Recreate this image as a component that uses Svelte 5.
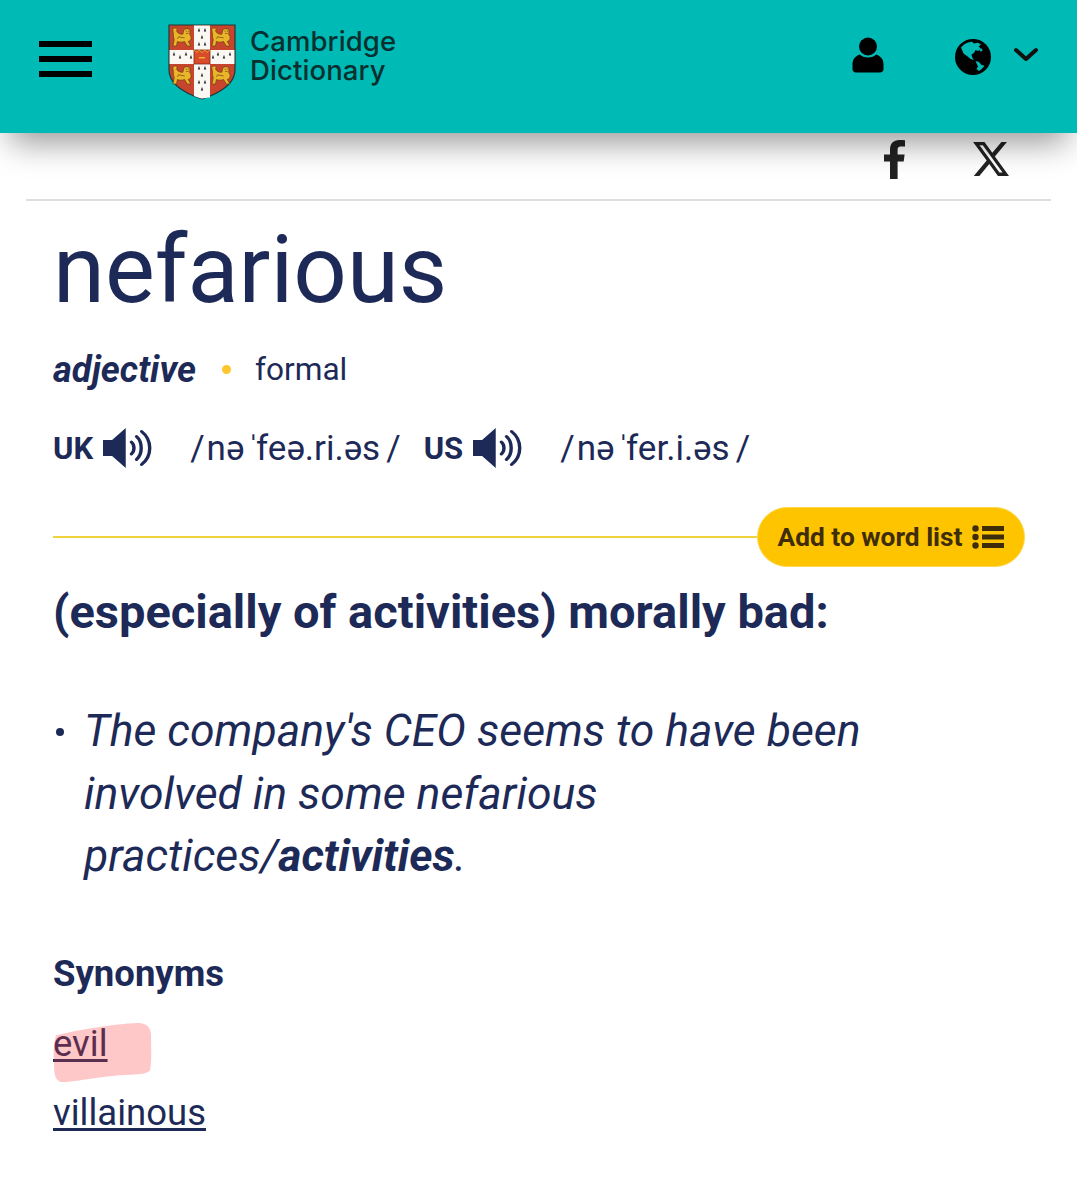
<script>
  const lions = [
    [4, 4], [43, 4], [4, 42], [43, 42]
  ];
  const ermine = [
    [31, 6], [37, 6], [34, 13], [31, 20], [37, 20],
    [6, 30], [12, 33], [18, 30], [23, 33], [45, 33], [50, 30], [56, 33], [62, 30],
    [31, 44], [37, 44], [34, 51], [31, 58], [37, 58], [34, 65]
  ];
</script>

<header class="top">
  <button class="burger" aria-label="Menu"><span></span><span></span><span></span></button>
  <div class="brand">
    <svg class="shield" viewBox="0 0 68 76" aria-hidden="true">
      <path d="M1 1H67V46C67 60 52 69 34 75C16 69 1 60 1 46Z" fill="#c8452d" stroke="#1d3a3a" stroke-width="1.2"/>
      <path d="M26 1.600H42V26H66.400V40H42V73.500C38 73.500 36 74.400 34 74.400C32 74.400 30 73.500 26 72V40H1.600V26H26Z" fill="#fbf8f4"/>
      {#each lions as [x, y]}
        <g transform="translate({x} {y}) scale(.9)">
          <path d="M1 3C0 0 4-1 6 1L5 3C6 6 9 7 12 7L13 3C13 0 20 0 20 3C20 6 19 8 21 9C22 12 20 15 18 15L21 20H17L14 15C11 16 8 16 6 15L5 20H1L2.500 13C1 10 2 6 1 3Z" fill="#eab42b" stroke="#5c3d0c" stroke-width=".7"/>
          <path d="M15 3.500h1.500M17.500 3.500h1.500M15.500 6h3M8 10l6 1M6 12l2-3" stroke="#5c3d0c" stroke-width=".7" fill="none"/>
        </g>
      {/each}
      {#each ermine as [x, y]}
        <path d="M{x} {y - 2.2}l1.200 3.600h-2.400z" fill="#23282b"/>
      {/each}
      <rect x="26" y="26" width="16" height="14" fill="#d94b2b" stroke="#7b2a18" stroke-width=".8"/>
      <path d="M26 26l3 2.500 2-2.500 3 2.500 3-2.500 2 2.500 3-2.500" fill="none" stroke="#e9b32a" stroke-width=".8"/>
      <path d="M31 33h6v1.500h-6z" fill="#e9b32a"/>
    </svg>
    <div class="wordmark">Cambridge<br />Dictionary</div>
  </div>
  <div class="tools">
    <svg class="user" viewBox="0 0 32 36" aria-label="Account">
      <circle cx="16" cy="9.500" r="9"/>
      <path d="M8 17.500C11 21.500 21 21.500 24 17.500C28 18.500 31.500 22 31.500 27V32C31.500 34 30 35.500 28 35.500H4C2 35.500 .5 34 .5 32V27C.5 22 4 18.500 8 17.500Z"/>
    </svg>
    <svg class="globe" viewBox="0 0 36 36" aria-label="Language">
      <circle cx="18" cy="18" r="18" fill="#000"/>
      <path d="M6 8.500C9 5 13 3 17 2.800L19 4.500L23 3.800L26 5.500L23.500 7.500L26 9.500L23 12L20.500 11L19 14L16.500 15.500L17.500 19L19 21L15.500 20L12 17L8.500 14.500Z" fill="#00bab5"/>
      <path d="M20.500 22L24 23L26.500 26L29.500 26.500C28 29 26 31 24 32L21.500 30L23 27.500Z" fill="#00bab5"/>
      <path d="M24.500 10.500L27 9.500L27.500 12L25 12.500Z" fill="#00bab5"/>
    </svg>
    <svg class="chev" viewBox="0 0 26 16" aria-hidden="true"><path d="M3 3L13 12L23 3" fill="none" stroke="#111" stroke-width="4" stroke-linecap="round" stroke-linejoin="round"/></svg>
  </div>
</header>

<div class="social">
  <svg class="fb" viewBox="0 0 22 39" aria-label="Facebook">
    <path d="M6 39V21.500H0V14.600H6V9.600C6 3.400 9.600 0 15.200 0C17.900 0 20.200.2 21 .3V6.500H17.200C14.200 6.500 13.600 8 13.600 10V14.600H20.600L19.700 21.500H13.600V39Z" fill="#222"/>
  </svg>
  <svg class="xlogo" viewBox="1.200 2.250 21.600 19.500" preserveAspectRatio="none" aria-label="X">
    <path d="M18.244 2.250h3.308l-7.227 8.260 8.502 11.240H16.170l-5.214-6.817L4.990 21.750H1.680l7.730-8.835L1.254 2.250H8.080l4.713 6.231zm-1.161 17.520h1.833L7.084 4.126H5.117z" fill="#222"/>
  </svg>
</div>

<main>
  <h1>nefarious</h1>
  <div class="pos">
    <b>adjective</b>
    <i class="dot"></i>
    <span>formal</span>
  </div>
  <div class="pron">
    <b>UK</b>
    <svg class="speaker" viewBox="0 0 44 42" preserveAspectRatio="none" aria-hidden="true">
      <path d="M0 13H8L20 1V41L8 29H0Z" fill="#1d2a57"/>
      <path d="M25 15C28 18 28 24 25 27M29.500 9.500C35 15 35 27 29.500 32.500M34 4.500C43.500 13 43.500 29 34 37.500" fill="none" stroke="#1d2a57" stroke-width="3" stroke-linecap="round"/>
    </svg>
    <span class="ipa ipa1"><span class="sl">/</span>nə<span class="st">ˈ</span>feə.ri.əs<span class="sr">/</span></span>
    <b class="us">US</b>
    <svg class="speaker" viewBox="0 0 44 42" preserveAspectRatio="none" aria-hidden="true">
      <path d="M0 13H8L20 1V41L8 29H0Z" fill="#1d2a57"/>
      <path d="M25 15C28 18 28 24 25 27M29.500 9.500C35 15 35 27 29.500 32.500M34 4.500C43.500 13 43.500 29 34 37.500" fill="none" stroke="#1d2a57" stroke-width="3" stroke-linecap="round"/>
    </svg>
    <span class="ipa"><span class="sl">/</span>nə<span class="st">ˈ</span>fer.i.əs<span class="sr">/</span></span>
  </div>
  <div class="rule">
    <i></i>
    <button class="add">Add to word list
      <svg viewBox="0 0 32 24" aria-hidden="true">
        <g fill="#3f2d0a"><circle cx="3.500" cy="3.500" r="3.200"/><circle cx="3.500" cy="12" r="3.200"/><circle cx="3.500" cy="20.500" r="3.200"/><rect x="10" y="1" width="22" height="5"/><rect x="10" y="9.500" width="22" height="5"/><rect x="10" y="18" width="22" height="5"/></g>
      </svg>
    </button>
  </div>
  <h2>(especially of activities) morally bad:</h2>
  <ul>
    <li>The company's CEO seems to have been involved in some nefarious practices/<b>activities</b>.</li>
  </ul>
  <h3>Synonyms</h3>
  <div class="syn">
    <svg class="mark" viewBox="0 0 100 58" preserveAspectRatio="none" aria-hidden="true">
      <path d="M3 12C30 6 60 1 86 0C94 0 99 4 99 12C99 24 100 36 98 47C92 52 78 50 60 52C40 54 20 58 8 58C2 56 1 50 1 40C0 30 1 20 3 12Z" fill="#fa3a3e" fill-opacity=".28"/>
    </svg>
    <a href="#evil">evil</a>
    <a href="#villainous">villainous</a>
  </div>
</main>

<style>
  :global(body) { margin: 0; background: #fff; }
  :global(#app) { font-family: Roboto, "Liberation Sans", sans-serif; color: #1d2a57; height: 1200px; overflow: hidden; }

  .top {
    position: relative;
    z-index: 1;
    height: 133px;
    background: #00bab5;
    box-shadow: 0 20px 30px -10px rgba(0, 0, 0, .4);
    display: flex;
    align-items: flex-start;
    padding: 0 38px 0 39px;
    box-sizing: border-box;
  }
  .burger {
    width: 53px;
    padding: 0;
    margin-top: 41px;
    border: 0;
    background: none;
    display: flex;
    flex-direction: column;
    gap: 9px;
  }
  .burger span { height: 6px; background: #000; display: block; }
  .brand { display: flex; margin-left: 76px; margin-top: 24px; gap: 14px; }
  .shield { width: 68px; height: 76px; display: block; }
  .wordmark {
    font-family: Inter, Lato, sans-serif;
    font-size: 27.500px;
    font-weight: 500;
    line-height: 29px;
    letter-spacing: .1px;
    color: #07302f;
    margin-top: 3px;
  }
  .tools { margin-left: auto; display: flex; align-items: flex-start; }
  .user { width: 32px; height: 36px; margin-top: 37px; display: block; fill: #000; }
  .globe { width: 36px; height: 36px; margin-top: 39px; margin-left: 71px; display: block; }
  .chev { width: 26px; height: 16px; margin-top: 47px; margin-left: 22px; display: block; }

  .social {
    height: 66px;
    margin: 0 26px;
    border-bottom: 2px solid #dedede;
    display: flex;
    align-items: flex-start;
    justify-content: flex-end;
  }
  .fb { width: 22px; height: 39px; margin-top: 7px; margin-right: 67px; display: block; }
  .xlogo { width: 36px; height: 34px; margin-top: 9px; margin-right: 42px; display: block; }

  main { padding: 0 52px 0 53px; }
  h1 { margin: 17px 0 0; font-size: 94px; line-height: 104px; font-weight: 400; }
  .pos { display: flex; align-items: center; height: 44px; margin-top: 25px; font-size: 31.600px; }
  .pos b { font-style: italic; font-weight: 700; font-size: 36.300px; }
  .dot { width: 9px; height: 9px; border-radius: 50%; background: #fec52e; margin: 0 24px 0 26px; }
  .pron { display: flex; align-items: center; height: 44px; margin-top: 35px; font-size: 35px; }
  .pron b { font-size: 31px; font-weight: 700; }
  .speaker { width: 50px; height: 42px; margin-left: 10px; display: block; }
  .ipa { margin-left: 37px; white-space: nowrap; }
  .ipa1 { margin-right: 23px; }
  .sl { margin-right: 2px; }
  .sr { margin-left: 6px; }
  .st { margin: 0 -3px 0 3px; }
  .rule { display: flex; align-items: center; margin-top: 37px; }
  .rule i { flex: 1; height: 2px; background: #f0d23c; }
  .add {
    width: 268px;
    height: 60px;
    border: 1px solid #fbd84d;
    border-radius: 30px;
    background: #fec400;
    color: #3f2d0a;
    font: 700 26.300px Roboto, sans-serif;
    display: flex;
    align-items: center;
    justify-content: center;
    gap: 10px;
    padding: 0;
  }
  .add svg { width: 32px; height: 24px; display: block; }
  h2 { margin: 16px 0 0; font-size: 47px; line-height: 58px; font-weight: 700; }
  ul { margin: 59px 0 0; padding: 0 140px 0 31px; font-size: 44.500px; line-height: 62.500px; font-style: italic; list-style: none; }
  li { position: relative; }
  li::before { content: ""; position: absolute; left: -28px; top: 28px; width: 8px; height: 8px; border-radius: 50%; background: currentColor; }
  li b { font-weight: 700; }
  h3 { margin: 64px 0 0; font-size: 36.500px; line-height: 44px; font-weight: 700; }
  .syn { position: relative; margin-top: 22px; display: flex; flex-direction: column; align-items: flex-start; gap: 18px; font-size: 36.500px; line-height: 51px; }
  .syn a { position: relative; color: inherit; text-decoration: underline; text-decoration-thickness: 3px; text-underline-offset: 3px; }
  .mark { position: absolute; left: 0; top: 5px; width: 99px; height: 59px; z-index: 1; }
</style>
